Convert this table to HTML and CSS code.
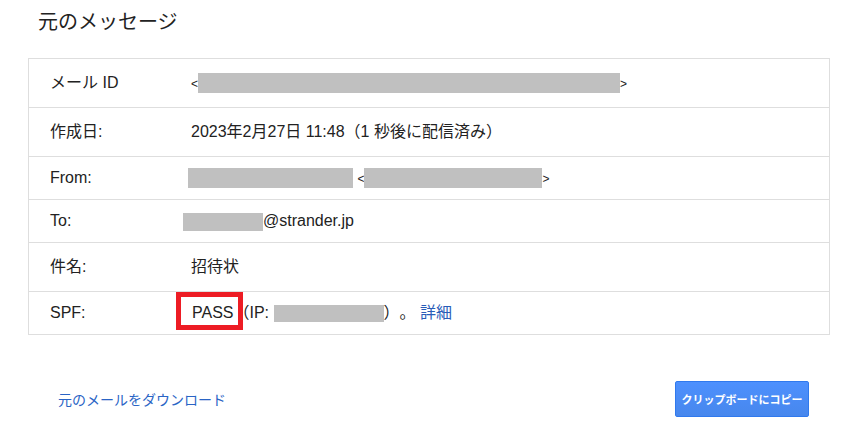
FILE: index.html
```html
<!DOCTYPE html>
<html lang="ja">
<head>
    <meta charset="UTF-8">
    <meta name="viewport" content="width=device-width, initial-scale=1.0">
    <title>元のメッセージ</title>
<link rel="stylesheet" href="styles.css">
</head>
<body>

  <div class="header">
    <h1>元のメッセージ</h1>
  </div>

  <div class="details">
    <div class="row tall">
      <div class="label">メール ID</div>
      <div class="value"><span class="angle">&lt;</span><span class="mask" style="width:422px;height:20px"></span><span class="angle">&gt;</span></div>
    </div>
    <div class="row tall">
      <div class="label">作成日:</div>
      <div class="value">2023年2月27日 11:48（1 秒後に配信済み）</div>
    </div>
    <div class="row">
      <div class="label">From:</div>
      <div class="value shift-from"><span class="mask" style="width:165px;height:20px"></span> <span class="angle">&lt;</span><span class="mask" style="width:178px;height:20px"></span><span class="angle">&gt;</span></div>
    </div>
    <div class="row">
      <div class="label">To:</div>
      <div class="value shift-to"><span class="mask" style="width:80px;height:18px"></span>@strander.jp</div>
    </div>
    <div class="row tall">
      <div class="label">件名:</div>
      <div class="value">招待状</div>
    </div>
    <div class="row">
      <div class="label">SPF:</div>
      <div class="value"><span class="pass">PASS</span>（IP: <span class="mask" style="width:110px;height:17px"></span><span class="punct">）</span><span class="punct">。</span> <a href="#" class="more">詳細</a></div>
    </div>
  </div>

  <div class="footer">
    <a href="#" class="download">元のメールをダウンロード</a>
    <button class="copy">クリップボードにコピー</button>
  </div>

</body>
</html>
```

FILE: styles.css
```css
body {
  margin: 0;
  padding: 0;
  color: #222;
  font-family: "Liberation Sans", Arial, "Noto Sans CJK JP", sans-serif;
  background: #fff;
}

.header {
  height: 58px;
  padding-left: 38px;
}

h1 {
  margin: 0;
  font-size: 20px;
  font-weight: normal;
  line-height: 42px;
  font-family: "Noto Sans CJK JP", sans-serif;
  color: #222;
}

.details {
  width: 800px;
  margin-left: 28px;
  border: 1px solid #dedede;
}

.row {
  display: grid;
  grid-template-columns: 162px 1fr;
  align-items: center;
  height: 42px;
  border-bottom: 1px solid #dedede;
  font-size: 16px;
}

.row.tall {
  height: 48px;
}

.row:last-child {
  border-bottom: none;
}

.label {
  padding-left: 21px;
  line-height: 20px;
}

.value {
  line-height: 20px;
  white-space: nowrap;
}

.shift-from {
  margin-left: -3px;
}

.shift-to {
  margin-left: -8px;
}

.mask {
  display: inline-block;
  vertical-align: middle;
  background-color: #c0c0c0;
}

.angle {
  font-size: 12px;
  vertical-align: middle;
}

.punct {
  display: inline-block;
  width: 16px;
}

.pass {
  position: relative;
  margin-left: 1px;
}

.pass::after {
  content: "";
  position: absolute;
  left: -16px;
  top: -12px;
  width: 67px;
  height: 38px;
  border: 5px solid #ed1c24;
  box-sizing: border-box;
}

.more {
  color: #2a5db8;
  text-decoration: none;
}

.footer {
  display: flex;
  justify-content: space-between;
  align-items: center;
  margin-top: 46px;
  padding: 0 55px 0 58px;
}

.download {
  color: #2a64c5;
  font-size: 14px;
  text-decoration: none;
  font-family: "Noto Sans CJK JP", sans-serif;
}

.copy {
  width: 134px;
  height: 36px;
  padding: 0;
  border: 1px solid #3079ed;
  border-radius: 2px;
  background: linear-gradient(#4d90fe, #4787ed);
  color: #fff;
  font-size: 11px;
  font-weight: bold;
  font-family: "Noto Sans CJK JP", sans-serif;
  cursor: pointer;
}
```
